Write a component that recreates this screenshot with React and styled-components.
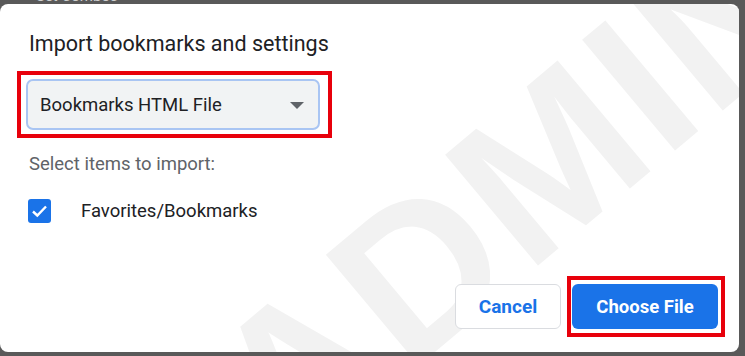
import React from "react";
import styled, { createGlobalStyle } from "styled-components";

const Global = createGlobalStyle`
  html, body { margin: 0; padding: 0; background: #595959; }
  body { font-family: Roboto, "Liberation Sans", Arial, sans-serif; width: 745px; height: 356px; overflow: hidden; }
`;

const Backdrop = styled.div`
  height: 4px;
  overflow: hidden;
  padding-left: 36px;
`;

const BackdropText = styled.div`
  margin-top: -12px;
  font-size: 15px;
  line-height: 16px;
  color: #cfcfcf;
`;

const Dialog = styled.div`
  position: relative;
  width: 739px;
  height: 348px;
  background: #fff;
  border-radius: 8px;
  overflow: hidden;
  box-sizing: border-box;
  padding-top: 27px;
  display: flex;
  flex-direction: column;
`;

const Watermark = styled.div`
  position: absolute;
  left: 175px;
  top: 335px;
  font-family: "Liberation Sans", Arial, sans-serif;
  font-weight: 700;
  font-size: 210px;
  line-height: 1;
  letter-spacing: 4px;
  color: #f2f2f2;
  transform: rotate(-40deg);
  transform-origin: 0 0;
  pointer-events: none;
  white-space: nowrap;
  z-index: 0;
`;

const Content = styled.div`
  position: relative;
  z-index: 1;
  display: flex;
  flex-direction: column;
  flex: 1;
`;

const Title = styled.h1`
  margin: 0 0 0 29px;
  font-size: 21.5px;
  font-weight: 400;
  line-height: 26px;
  color: #202124;
`;

const Highlight = styled.div`
  align-self: flex-start;
  margin-left: ${(p) => p.$left || 0}px;
  margin-top: ${(p) => p.$top || 0}px;
  border: 4px solid #e8000b;
  padding: ${(p) => p.$pad || "4px"};
  box-sizing: border-box;
`;

const SelectBox = styled.div`
  width: 294px;
  height: 51px;
  box-sizing: border-box;
  background: #f1f3f4;
  border: 2px solid #a9c5f3;
  border-radius: 7px;
  display: flex;
  align-items: center;
  justify-content: space-between;
  padding: 0 14px 0 12px;
  font-size: 18.5px;
  color: #202124;
`;

const Caret = styled.span`
  width: 0;
  height: 0;
  border-left: 7px solid transparent;
  border-right: 7px solid transparent;
  border-top: 7px solid #5f6368;
  margin-top: 1px;
`;

const Label = styled.div`
  margin: 15px 0 0 29px;
  font-size: 18.5px;
  line-height: 22px;
  color: #5f6368;
`;

const CheckRow = styled.label`
  display: flex;
  align-items: center;
  margin: 24px 0 0 28px;
  font-size: 18.5px;
  color: #202124;
  gap: 30px;
`;

const Box = styled.span`
  width: 23px;
  height: 24px;
  border-radius: 3px;
  background: #1a73e8;
  display: flex;
  align-items: center;
  justify-content: center;
`;

const Footer = styled.div`
  margin-top: auto;
  display: flex;
  justify-content: flex-end;
  align-items: center;
  gap: 6px;
  padding: 0 14px 15px 0;
`;

const Button = styled.button`
  height: 45px;
  box-sizing: border-box;
  border-radius: 6px;
  font-family: Roboto, "Liberation Sans", Arial, sans-serif;
  font-weight: 700;
  font-size: ${(p) => p.$fs || 18.5}px;
  cursor: pointer;
  padding: 0;
  width: ${(p) => p.$w}px;
  background: ${(p) => (p.$primary ? "#1a73e8" : "#fff")};
  color: ${(p) => (p.$primary ? "#fff" : "#1a73e8")};
  border: ${(p) => (p.$primary ? "none" : "1px solid #dadce0")};
`;

export default function App() {
  return (
    <>
      <Global />
      <Backdrop>
        <BackdropText>Set Combos</BackdropText>
      </Backdrop>
      <Dialog>
        <Watermark>ADMIN</Watermark>
        <Content>
          <Title>Import bookmarks and settings</Title>
          <Highlight $left={17} $top={14} $pad="4px 8px 4px 5px">
            <SelectBox>
              <span>Bookmarks HTML File</span>
              <Caret />
            </SelectBox>
          </Highlight>
          <Label>Select items to import:</Label>
          <CheckRow>
            <Box>
              <svg width="17" height="14" viewBox="0 0 17 14">
                <path d="M2 7.5 L6.3 11.5 L15 2.5" fill="none" stroke="#fff" strokeWidth="2.4" />
              </svg>
            </Box>
            Favorites/Bookmarks
          </CheckRow>
          <Footer>
            <Button $w={106} $fs={19}>Cancel</Button>
            <Highlight $pad="4px 3px 4px 1px">
              <Button $primary $w={146}>Choose File</Button>
            </Highlight>
          </Footer>
        </Content>
      </Dialog>
    </>
  );
}
